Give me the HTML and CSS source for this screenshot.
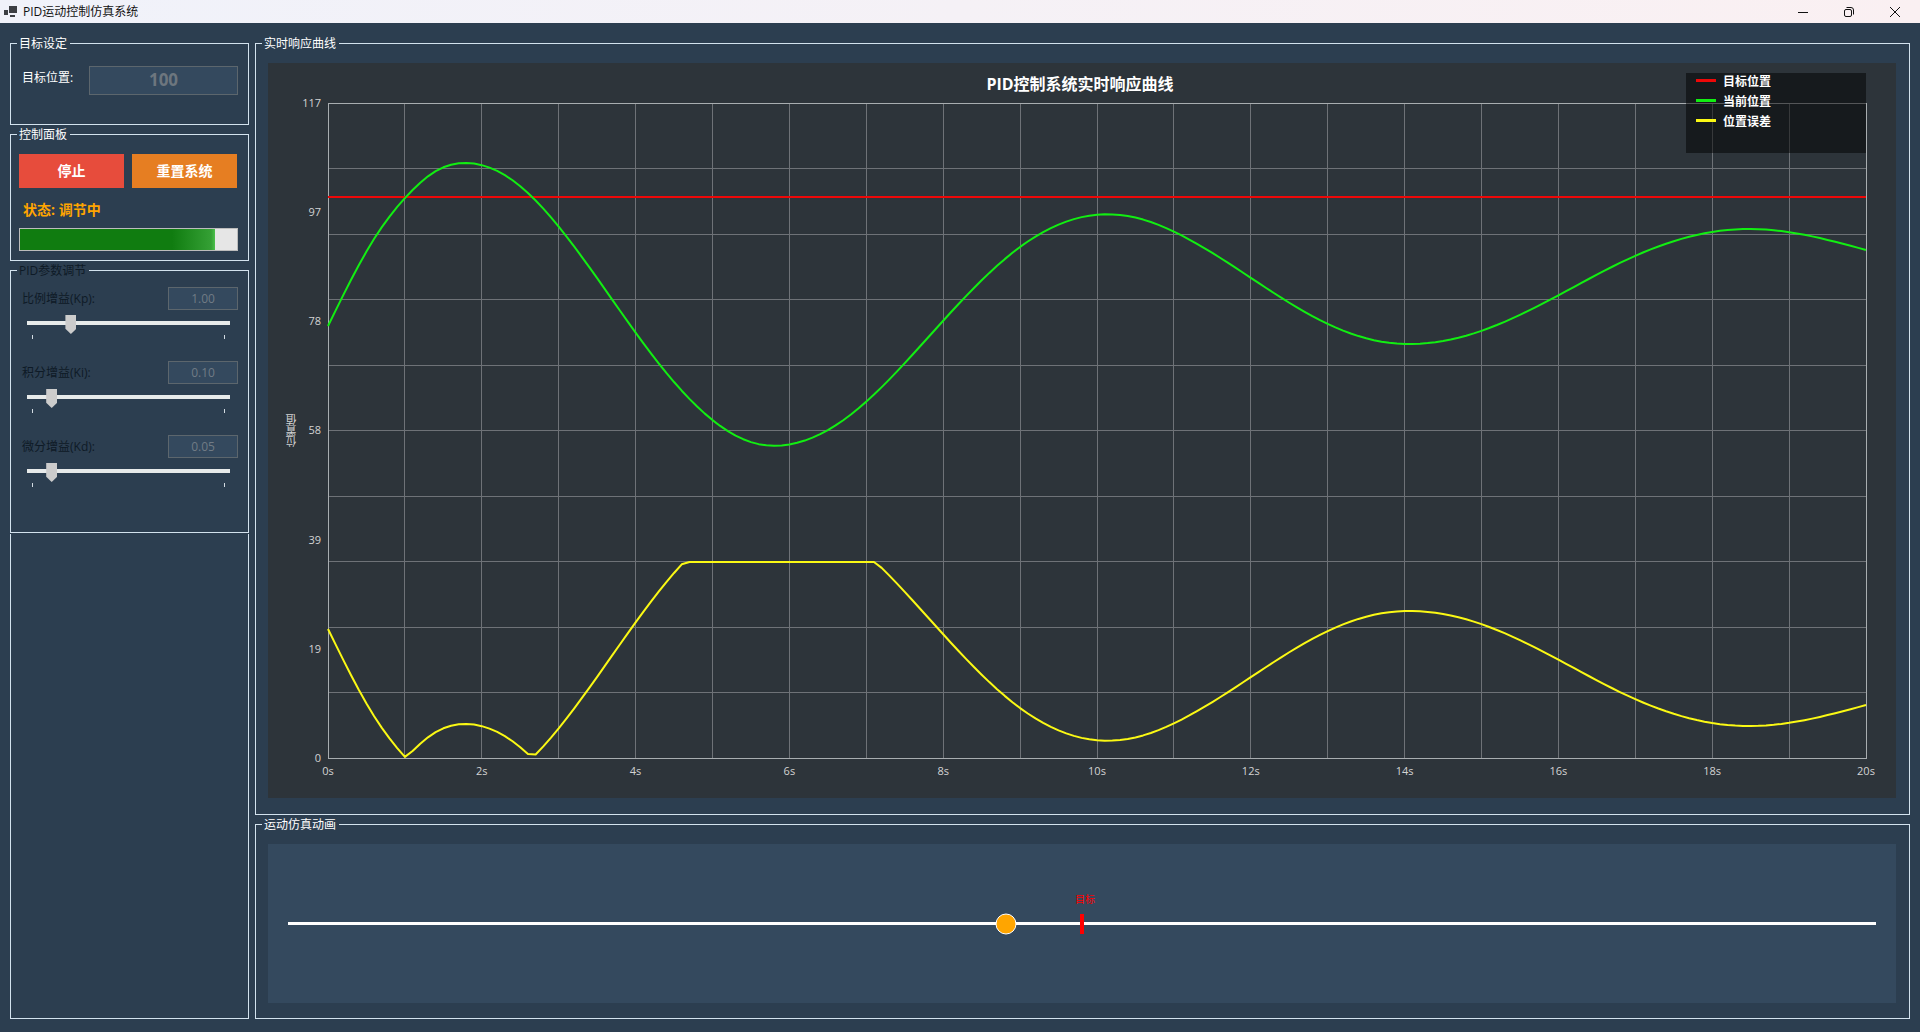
FILE: index.html
```html
<!DOCTYPE html>
<html lang="zh-CN">
<head>
<meta charset="utf-8">
<title>PID运动控制仿真系统</title>
<link rel="stylesheet" href="styles.css">
</head>
<body>
<header class="titlebar">
  <svg class="app-icon" width="14" height="14" viewBox="0 0 14 14" aria-hidden="true">
    <path d="M5 1h8v7H5z M0 5h4v5H0z M6 10h5v2H6z" fill="#3c3f44"/>
  </svg>
  <h1 class="window-title">PID运动控制仿真系统</h1>
  <div class="window-buttons">
    <button type="button" class="window-button" aria-label="最小化">
      <svg width="12" height="12" viewBox="0 0 12 12"><path d="M1 6.5h10" stroke="#111" fill="none"/></svg>
    </button>
    <button type="button" class="window-button" aria-label="还原">
      <svg width="12" height="12" viewBox="0 0 12 12"><rect x="1.5" y="3.5" width="7" height="7" rx="1.5" stroke="#111" fill="none"/><path d="M3.5 1.5H8A2.5 2.5 0 0 1 10.5 4V8.5" stroke="#111" fill="none"/></svg>
    </button>
    <button type="button" class="window-button" aria-label="关闭">
      <svg width="12" height="12" viewBox="0 0 12 12"><path d="M1 1l10 10M11 1L1 11" stroke="#111" fill="none"/></svg>
    </button>
  </div>
</header>

<main class="workspace">
  <div class="sidebar">
    <fieldset class="group group-target">
      <legend>目标设定</legend>
      <div class="target-row">
        <label for="target">目标位置:</label>
        <input class="field field-large" id="target" type="text" value="100" disabled>
      </div>
    </fieldset>

    <fieldset class="group group-control">
      <legend>控制面板</legend>
      <div class="control-body">
        <div class="button-row">
          <button type="button" class="action action-stop">停止</button>
          <button type="button" class="action action-reset">重置系统</button>
        </div>
        <label class="status" for="progress">状态: 调节中</label>
        <progress class="progress" id="progress" max="100" value="90"></progress>
      </div>
    </fieldset>

    <fieldset class="group group-pid">
      <legend>PID参数调节</legend>
      <div class="param">
        <div class="param-row">
          <label for="kp">比例增益(Kp):</label>
          <input class="field" id="kp" type="text" value="1.00" disabled>
        </div>
        <input class="slider" type="range" min="0" max="50" value="10" aria-label="Kp" disabled>
        <div class="ticks"><i></i><i></i></div>
      </div>
      <div class="param">
        <div class="param-row">
          <label for="ki">积分增益(Ki):</label>
          <input class="field" id="ki" type="text" value="0.10" disabled>
        </div>
        <input class="slider" type="range" min="0" max="50" value="5" aria-label="Ki" disabled>
        <div class="ticks"><i></i><i></i></div>
      </div>
      <div class="param">
        <div class="param-row">
          <label for="kd">微分增益(Kd):</label>
          <input class="field" id="kd" type="text" value="0.05" disabled>
        </div>
        <input class="slider" type="range" min="0" max="50" value="5" aria-label="Kd" disabled>
        <div class="ticks"><i></i><i></i></div>
      </div>
    </fieldset>

    <div class="sidebar-rest"></div>
  </div>

  <div class="content">
    <fieldset class="group group-chart">
      <legend>实时响应曲线</legend>
      <div class="chart">
        <h2 class="chart-title">PID控制系统实时响应曲线</h2>
        <div class="y-axis">
          <span class="y-title">位置值</span>
          <div class="y-labels">
            <span>117</span><span>97</span><span>78</span><span>58</span><span>39</span><span>19</span><span>0</span>
          </div>
        </div>
        <div class="plot">
          <svg class="plot-svg" viewBox="0 0 1538 655" preserveAspectRatio="none" role="img" aria-label="响应曲线">
            <path class="grid" id="grid"/>
            <rect class="frame" width="1538" height="655"/>
            <path class="series series-target" d="M0 94H1538"/>
            <path class="series series-current" id="current"/>
            <path class="series series-error" id="error"/>
          </svg>
        </div>
        <div class="x-labels">
          <span>0s</span><span>2s</span><span>4s</span><span>6s</span><span>8s</span><span>10s</span><span>12s</span><span>14s</span><span>16s</span><span>18s</span><span>20s</span>
        </div>
        <ul class="chart-legend">
          <li class="key key-target">目标位置</li>
          <li class="key key-current">当前位置</li>
          <li class="key key-error">位置误差</li>
        </ul>
      </div>
    </fieldset>

    <fieldset class="group group-motion">
      <legend>运动仿真动画</legend>
      <div class="stage">
        <div class="rail">
          <span class="goal" style="left: 50%"><span class="goal-label">目标</span></span>
          <span class="ball" style="left: 45.24%"></span>
        </div>
      </div>
    </fieldset>
  </div>
</main>
<script src="script.js"></script>
</body>
</html>
```
FILE: styles.css
```css
* {
  box-sizing: border-box;
}

body {
  display: flex;
  flex-direction: column;
  min-height: 100vh;
  margin: 0;
  background: #2c3e50;
  color: #fff;
  font: 12px/17px "Open Sans", "Noto Sans CJK SC", sans-serif;
}

button,
input {
  font: inherit;
}

/* Title bar */

.titlebar {
  display: flex;
  align-items: center;
  height: 23px;
  padding: 0 2px 0 4px;
  background: linear-gradient(90deg, #f0f2fa, #faf0f2);
  color: #111;
}

.app-icon {
  margin-right: 5px;
}

.window-title {
  flex: 1;
  margin: 0;
  font-size: 12px;
  font-weight: 400;
}

.window-buttons {
  display: flex;
}

.window-button {
  display: flex;
  align-items: center;
  justify-content: center;
  width: 46px;
  height: 22px;
  padding: 0;
  border: 0;
  background: none;
}

/* Layout */

.workspace {
  display: grid;
  flex: 1;
  grid-template-columns: 239px minmax(0, 1fr);
  gap: 6px;
  padding: 12px 10px 13px;
}

.sidebar,
.content {
  display: flex;
  flex-direction: column;
  gap: 1px;
}

.sidebar-rest {
  flex: 1;
  border: 1px solid #d3e2ee;
  border-top: 0;
}

.group {
  min-width: 0;
  margin: 0;
  padding: 0 6px;
  border: 1px solid #d3e2ee;
}

.group legend {
  padding: 0 3px 0 2px;
}

/* Target */

.group-target {
  padding-bottom: 29px;
}

.target-row {
  display: flex;
  align-items: flex-start;
  margin: 14px 4px 0 5px;
}

.target-row label {
  width: 67px;
  line-height: 24px;
}

.field {
  width: 70px;
  min-width: 0;
  height: 23px;
  padding: 0 0 1px;
  border: 1px solid #5c666d;
  border-radius: 0;
  background: #34495e;
  color: #707b85;
  text-align: center;
}

.field-large {
  flex: 1;
  height: 29px;
  padding-bottom: 2px;
  color: #6d767e;
  font-size: 17px;
  font-weight: 700;
}

/* Control panel */

.group-control {
  padding-bottom: 9px;
}

.control-body {
  display: flex;
  flex-direction: column;
  margin: 11px 4px 0 2px;
}

.button-row {
  display: grid;
  grid-template-columns: 1fr 1fr;
  gap: 8px;
  margin-right: 1px;
}

.action {
  height: 34px;
  padding: 0 0 2px;
  border: 0;
  color: #fff;
  font-size: 14px;
  font-weight: 700;
}

.action-stop {
  background: #e74c3c;
}

.action-reset {
  background: #e67e22;
}

.status {
  margin: 12px 0 8px 4px;
  color: #ffa500;
  font-size: 14px;
  font-weight: 700;
  line-height: 20px;
}

.progress {
  width: 100%;
  height: 23px;
  border: 1px solid #bcbcbc;
  appearance: none;
  background: #e6e6e6;
}

.progress::-webkit-progress-bar {
  background: #e6e6e6;
}

.progress::-webkit-progress-value {
  background: linear-gradient(90deg, #107c10 78%, #35a035 98%, #4cc04c);
}

/* PID parameters */

.group-pid {
  padding-bottom: 23px;
  color: #0e1a26;
}

.param {
  margin: 8px 4px 22px 5px;
}

.param + .param {
  margin-top: 22px;
}

.param-row {
  display: flex;
  align-items: center;
  justify-content: space-between;
}

.slider {
  display: block;
  width: 203px;
  height: 16px;
  margin: 5px 0 0 5px;
  appearance: none;
  background: none;
}

.slider::-webkit-slider-runnable-track {
  height: 4px;
  background: #e7eaea;
}

.slider::-webkit-slider-thumb {
  width: 11px;
  height: 19px;
  margin-top: -6px;
  appearance: none;
  background: #cccccc;
  clip-path: polygon(0 0, 100% 0, 100% 72%, 50% 100%, 0 72%);
}

.ticks {
  display: flex;
  justify-content: space-between;
  width: 193px;
  height: 4px;
  margin: 4px 0 0 10px;
}

.ticks i {
  width: 1px;
  background: #d3dbe2;
}

/* Chart */

.group-chart {
  display: flex;
  flex: 1;
  flex-direction: column;
}

.chart {
  position: relative;
  display: grid;
  flex: 1;
  grid-template-rows: 40px minmax(300px, 1fr) 40px;
  grid-template-columns: 60px minmax(0, 1fr) 30px;
  margin: 11px 7px 16px 6px;
  background: #2d343a;
}

.chart-title {
  grid-column: 1 / -1;
  margin: 0;
  padding-right: 4px;
  font-size: 16px;
  line-height: 42px;
  text-align: center;
}

.y-axis {
  display: flex;
  align-items: center;
  justify-content: space-between;
  padding: 0 7px 0 16px;
  color: #d3d3d3;
  font-size: 11px;
  line-height: 16px;
}

.y-title {
  writing-mode: vertical-rl;
  transform: rotate(180deg);
}

.y-labels {
  display: flex;
  flex-direction: column;
  align-self: stretch;
  justify-content: space-between;
  margin: -8px 0;
  text-align: right;
}

.plot {
  position: relative;
}

.plot-svg {
  position: absolute;
  width: 100%;
  height: 100%;
  overflow: visible;
}

.plot-svg * {
  fill: none;
  vector-effect: non-scaling-stroke;
}

.grid {
  stroke: rgba(255, 255, 255, 0.31);
  shape-rendering: crispEdges;
}

.frame {
  stroke: #a8adb0;
  shape-rendering: crispEdges;
}

.series {
  stroke-width: 2;
  stroke-linejoin: round;
}

.series-target {
  stroke: #ee0808;
}

.series-current {
  stroke: #12ee12;
}

.series-error {
  stroke: #fbf914;
}

.x-labels {
  display: flex;
  grid-column: 2;
  justify-content: space-between;
  margin: 0 -20px;
  padding-top: 5px;
  color: #d3d3d3;
  font-size: 11px;
  line-height: 16px;
  text-align: center;
}

.x-labels span {
  width: 40px;
}

.chart-legend {
  position: absolute;
  top: 10px;
  right: 30px;
  width: 180px;
  height: 80px;
  margin: 0;
  padding: 0 10px;
  background: rgba(0, 0, 0, 0.5);
  font-weight: 700;
  list-style: none;
}

.key {
  display: flex;
  gap: 7px;
  height: 20px;
}

.key::before {
  width: 20px;
  height: 3px;
  margin-top: 6px;
  content: "";
}

.key-target::before {
  background: #ee0808;
}

.key-current::before {
  background: #12ee12;
}

.key-error::before {
  background: #fbf914;
}

/* Motion */

.group-motion {
  display: flex;
  flex-direction: column;
}

.stage {
  display: flex;
  align-items: center;
  height: 159px;
  margin: 11px 7px 15px 6px;
  padding: 0 20px;
  background: #34495e;
}

.rail {
  position: relative;
  flex: 1;
  height: 3px;
  background: #fff;
}

.goal,
.ball {
  position: absolute;
  top: 50%;
  transform: translate(-50%, -50%);
}

.goal {
  width: 4px;
  height: 20px;
  background: #f00;
}

.goal-label {
  position: absolute;
  bottom: 27px;
  left: -5px;
  color: #f00;
  font-size: 10px;
  line-height: 16px;
  white-space: nowrap;
}

.ball {
  width: 21px;
  height: 21px;
  border: 1px solid #fff;
  border-radius: 50%;
  background: #ffa500;
}
```
FILE: script.js
```js
// Plot space: 1538 x 655 units, 20 seconds wide, origin at the top left.
const WIDTH = 1538;
const HEIGHT = 655;
const TARGET_Y = 94;
const MAX_ERROR = 196;

const trace = [
  [0, 223], [49, 131.3], [77, 95], [109, 67.4], [139, 60], [192, 83],
  [231, 124], [284, 196.3], [332, 262], [385, 317.5], [430, 341], [449, 342.7],
  [500, 327], [539, 298], [575, 262], [635, 196.3], [692, 144], [720, 126.5],
  [750, 115], [780, 111.3], [808, 114.7], [846, 128.7], [922, 174.3],
  [970, 205], [1000, 221], [1045, 237], [1083, 241], [1153, 228],
  [1231, 192], [1296, 158], [1384, 129], [1421, 126], [1462, 129.3],
  [1538, 147]
];

// Natural cubic spline through the trace.
const last = trace.length - 1;
const curve = new Array(trace.length).fill(0);
const upper = new Array(trace.length).fill(0);
for (let i = 1; i < last; i++) {
  const hl = trace[i][0] - trace[i - 1][0];
  const hr = trace[i + 1][0] - trace[i][0];
  const left = (trace[i][1] - trace[i - 1][1]) / hl;
  const right = (trace[i + 1][1] - trace[i][1]) / hr;
  const pivot = 2 * (hl + hr) - hl * upper[i - 1];
  upper[i] = hr / pivot;
  curve[i] = (6 * (right - left) - hl * curve[i - 1]) / pivot;
}
for (let i = last - 1; i > 0; i--) curve[i] -= upper[i] * curve[i + 1];

function sample(x) {
  let i = 0;
  while (i < last - 1 && trace[i + 1][0] < x) i++;
  const [x0, y0] = trace[i];
  const [x1, y1] = trace[i + 1];
  const h = x1 - x0;
  const a = (x1 - x) / h;
  const b = (x - x0) / h;
  return a * y0 + b * y1 +
    ((a * a * a - a) * curve[i] + (b * b * b - b) * curve[i + 1]) * h * h / 6;
}

const current = [];
const error = [];
for (let k = 0; k <= 200; k++) {
  const x = k * WIDTH / 200;
  const y = sample(x);
  current.push(x + " " + y);
  error.push(x + " " + (HEIGHT - Math.min(MAX_ERROR, Math.abs(y - TARGET_Y))));
}
document.getElementById("current").setAttribute("d", "M" + current.join("L"));
document.getElementById("error").setAttribute("d", "M" + error.join("L"));

let grid = "";
for (let i = 1; i < 20; i++) grid += "M" + i * WIDTH / 20 + " 0V" + HEIGHT;
for (let i = 1; i < 10; i++) grid += "M0 " + i * HEIGHT / 10 + "H" + WIDTH;
document.getElementById("grid").setAttribute("d", grid);
```
